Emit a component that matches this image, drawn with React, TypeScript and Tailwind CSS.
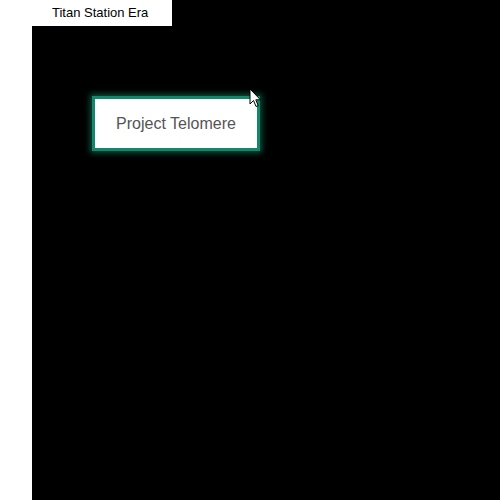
import React from "react";

export default function App() {
  return (
    <div className="relative h-[500px] w-[500px] bg-white" style={{ fontFamily: '"Liberation Sans", Arial, sans-serif' }}>
      <div className="ml-[32px] h-full bg-black pl-[60px] pt-[96px]">
        <div className="flex h-[55px] w-[168px] items-center justify-center border-[3px] border-[#14876b] bg-white text-[16px] text-[#555555] shadow-[0_0_6px_2px_rgba(20,150,110,0.55)]">
          Project Telomere
        </div>
      </div>
      <div className="absolute left-0 top-0 flex h-[26px] w-[172px] items-center bg-white pl-[52px] text-[13px] text-black">
        Titan Station Era
      </div>
      <svg className="absolute left-[249px] top-[88px]" width="13" height="20" viewBox="0 0 13 20">
        <path d="M1 1 L1 16 L4.5 12.5 L7 18.5 L9.2 17.6 L6.8 11.8 L11.5 11.8 Z" fill="#ffffff" stroke="#000000" strokeWidth="1" strokeLinejoin="round" />
      </svg>
    </div>
  );
}
